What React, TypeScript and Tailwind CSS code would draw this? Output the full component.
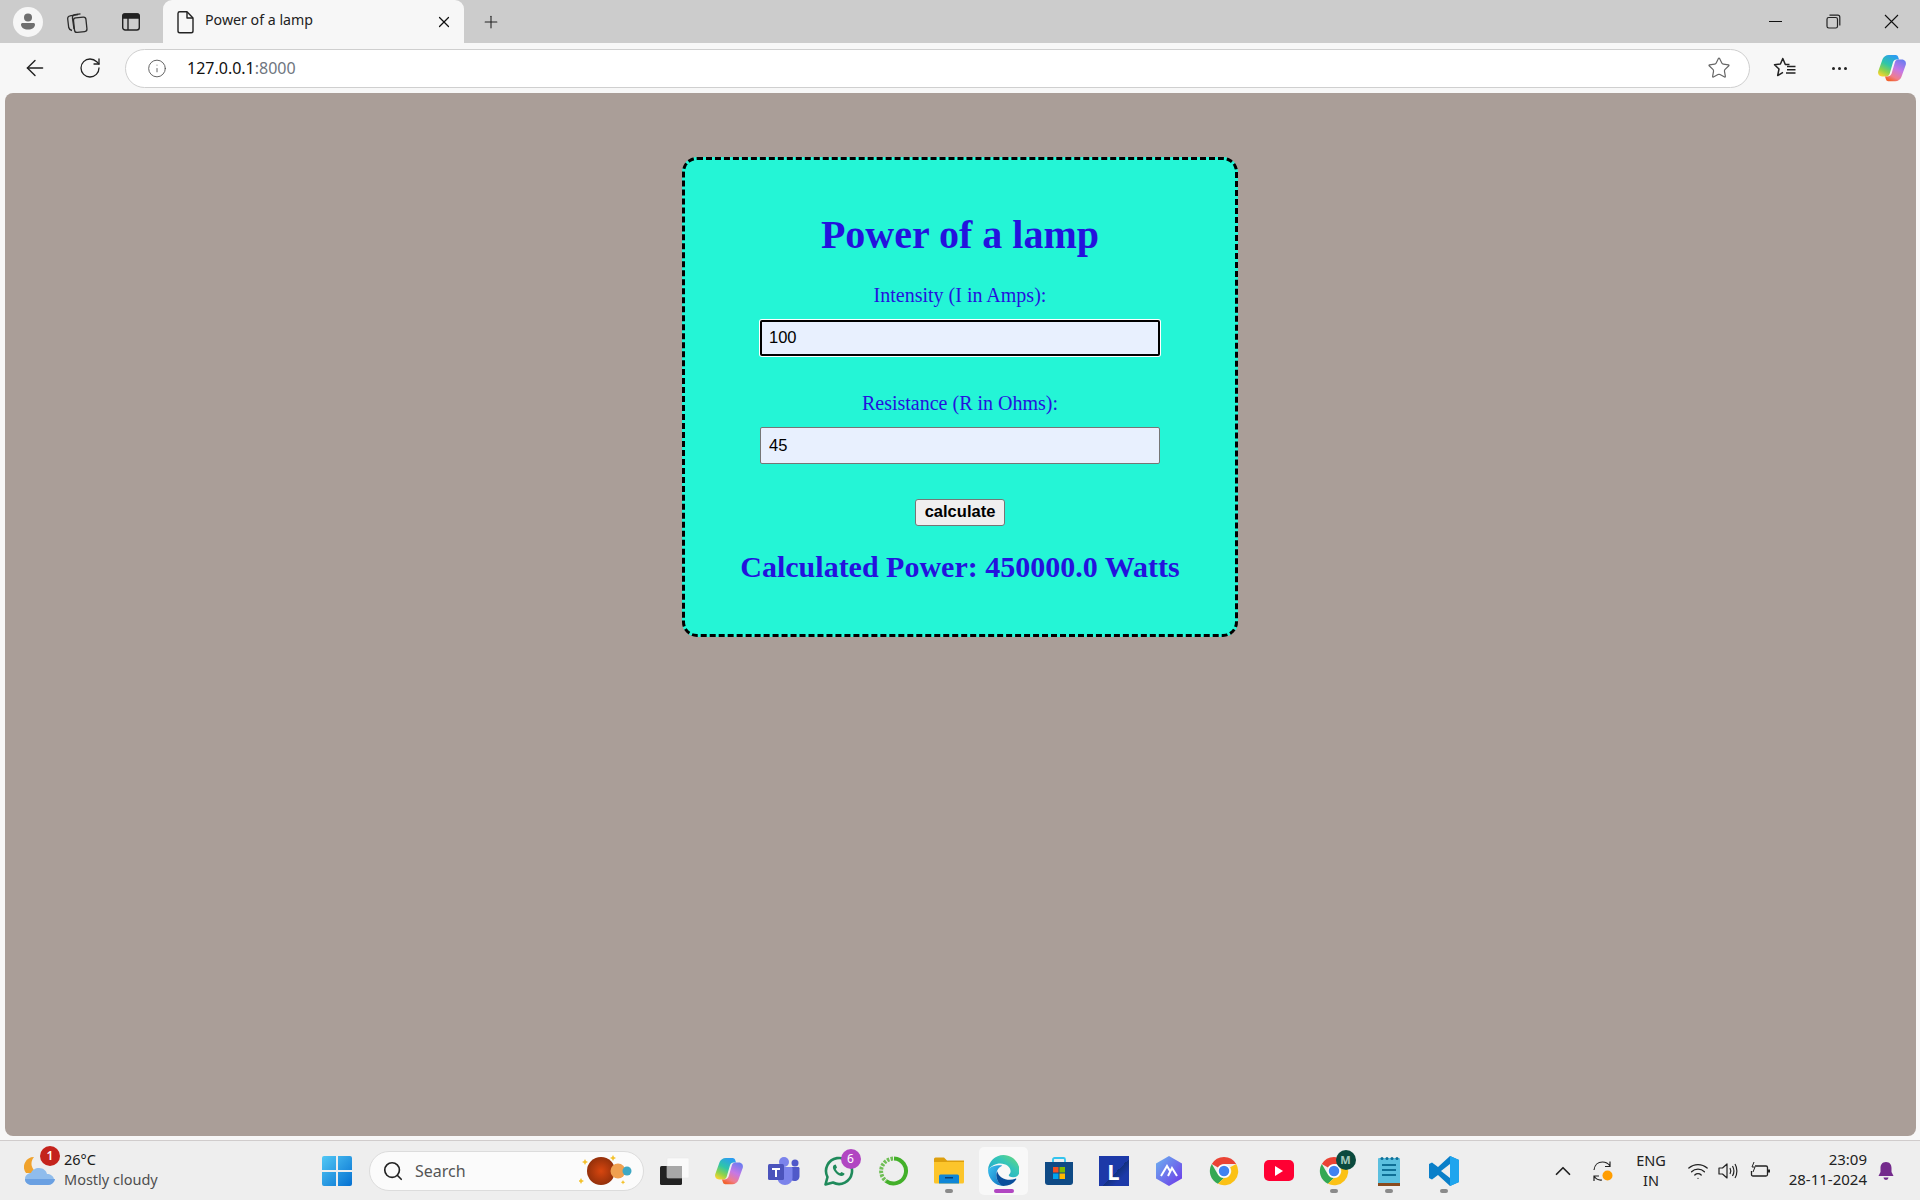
import React from "react";
import { ArrowLeft, RotateCw, X, Plus, Info, Star, ChevronUp, Wifi, Search } from "lucide-react";

const sans = "font-['Noto_Sans','Open_Sans',sans-serif]";

function Copilot({ size = 30, id }: { size?: number; id: string }) {
  return (
    <svg width={size} height={size} viewBox="0 0 32 32">
      <defs>
        <linearGradient id={`${id}a`} x1="0.7" y1="0" x2="0.2" y2="1">
          <stop offset="0" stopColor="#2b9cf2" />
          <stop offset="0.45" stopColor="#2fc6a8" />
          <stop offset="0.75" stopColor="#8fd24a" />
          <stop offset="1" stopColor="#f8d431" />
        </linearGradient>
        <linearGradient id={`${id}b`} x1="0.8" y1="0" x2="0.3" y2="1">
          <stop offset="0" stopColor="#6a7cf0" />
          <stop offset="0.45" stopColor="#c578e6" />
          <stop offset="0.8" stopColor="#f07d8c" />
          <stop offset="1" stopColor="#f2632f" />
        </linearGradient>
      </defs>
      <path d="M12.500 2H20c1.200 0 2 .8 2.400 1.800L23.500 7H21c-2 0-3.500 1.200-4 3l-3.500 12c-.6 2-2 3-4 3H5.500C2.500 25 .5 22.500 1.300 19.500L6 6.500C7 3.800 9.500 2 12.500 2z" fill={`url(#${id}a)`} />
      <path d="M19.500 30H12c-1.200 0-2-.8-2.400-1.800L8.500 25H11c2 0 3.500-1.200 4.500-3l3.500-12c.6-2 2-3 4-3h3.500c3 0 5 2.500 4.200 5.500L26 25.500C25 28.200 22.500 30 19.500 30z" fill={`url(#${id}b)`} />
    </svg>
  );
}

function Chrome({ size = 30 }: { size?: number }) {
  return (
    <svg width={size} height={size} viewBox="0 0 32 32">
      <path d="M16 1a15 15 0 0 1 13 7.500H16a7.500 7.500 0 0 0-6.500 3.750L3 8.500A15 15 0 0 1 16 1z" fill="#ea4335" />
      <path d="M3 8.500l6.500 11.250a7.500 7.500 0 0 0 6.500 3.750L9.500 29.700A15 15 0 0 1 3 8.500z" fill="#34a853" />
      <path d="M29 8.500A15 15 0 0 1 9.500 29.700L16 23.500a7.500 7.500 0 0 0 6.500-11.500z" fill="#fbc116" />
      <circle cx="16" cy="16" r="7" fill="#fff" />
      <circle cx="16" cy="16" r="5.600" fill="#3f82f1" />
    </svg>
  );
}

function Dot({ color = "#8a8a8a", w = 8 }: { color?: string; w?: number }) {
  return <span className="absolute bottom-[2px] left-1/2 h-[4px] -translate-x-1/2 rounded-full" style={{ width: w, background: color }} />;
}

function Cell({ children, dot, active }: { children: React.ReactNode; dot?: boolean; active?: boolean }) {
  return (
    <div className={active ? "relative mx-[3px] flex h-[48px] w-[49px] items-center justify-center rounded-[5px] bg-[#f8f8f8]" : "relative flex h-[48px] w-[55px] items-center justify-center"}>
      {children}
      {dot && <Dot />}
      {active && <Dot color="#b146c2" w={20} />}
    </div>
  );
}

function Tool({ children, w = 55 }: { children: React.ReactNode; w?: number }) {
  return <div className="flex h-full shrink-0 items-center justify-center" style={{ width: w }}>{children}</div>;
}

export default function App() {
  return (
    <div className={`flex h-[1200px] w-[1920px] flex-col overflow-hidden bg-[#f7f7f7] ${sans}`}>
      {/* tab strip */}
      <div className="flex h-[43px] shrink-0 items-center bg-[#cccccc]">
        <div className="ml-[13px] flex h-[30px] w-[30px] items-center justify-center rounded-full bg-[#f6f6f6]">
          <svg width="20" height="20" viewBox="0 0 20 20" fill="#6f6f6f">
            <circle cx="10" cy="5.500" r="4" />
            <path d="M3 12.500c0-1 .8-1.500 1.700-1.500h10.600c.9 0 1.700.5 1.700 1.500 0 3-3 5-7 5s-7-2-7-5z" />
          </svg>
        </div>
        <div className="ml-[22px] flex w-[24px] justify-center">
          <svg width="24" height="24" viewBox="0 0 24 24" fill="none" stroke="#2b2b2b" strokeWidth="1.300">
            <rect x="9" y="7.500" width="12.500" height="14.500" rx="2.500" transform="rotate(-6 15 15)" />
            <path d="M7 20.500C5 20 4 19 3.700 17.500L2.700 9C2.500 7.500 3.500 6 5 5.800L13 4.500" />
            <path d="M9 19 7.500 8.500C7.300 6.800 8.300 5 10 4.700L15.500 3.800" />
          </svg>
        </div>
        <div className="ml-[30px] flex w-[24px] justify-center">
          <svg width="20" height="20" viewBox="0 0 20 20" fill="none" stroke="#222" strokeWidth="1.400">
            <rect x="1.700" y="2" width="16.600" height="16" rx="2.500" />
            <path d="M2 3.500c0-1 .6-1.500 1.500-1.500h13c1 0 1.500.6 1.500 1.500V6H2z" fill="#222" />
            <path d="M7 6v12" />
          </svg>
        </div>
        <div className="ml-[20px] flex h-full w-[301px] items-center self-end rounded-t-[9px] bg-[#f7f7f7] pl-[11px] pr-[11px]">
          <svg width="22" height="24" viewBox="0 0 22 24" fill="none" stroke="#222" strokeWidth="1.400">
            <path d="M4 3.500C4 2.500 4.800 1.800 5.800 1.800H13L19 8v13c0 1-.8 1.800-1.800 1.800H5.800C4.800 22.800 4 22 4 21z" strokeLinejoin="round" />
            <path d="M13 2v6h6" strokeLinejoin="round" />
          </svg>
          <span className="ml-[9px] flex-1 pb-[2px] text-[14.2px] leading-none text-[#222]">Power of a lamp</span>
          <X size={18} strokeWidth={1.600} color="#111" />
        </div>
        <div className="ml-[17px] flex w-[20px] justify-center">
          <Plus size={24} strokeWidth={1.300} color="#222" />
        </div>
        <div className="ml-auto flex h-full items-center">
          <div className="mr-[1px] flex items-center">
            <Tool w={57}><span className="block h-[1px] w-[13px] bg-[#111]" /></Tool>
          </div>
          <Tool w={57}>
            <svg width="15" height="15" viewBox="0 0 15 15" fill="none" stroke="#222" strokeWidth="1.200">
              <rect x="1" y="3.500" width="10.500" height="10.500" rx="1.800" />
              <path d="M3.500 1.200h8.300c1.200 0 2 .8 2 2v8.300" />
            </svg>
          </Tool>
          <div className="ml-[1px]">
            <Tool w={57}>
              <svg width="15" height="15" viewBox="0 0 15 15" fill="none" stroke="#111" strokeWidth="1.100"><path d="M1 1l13 13M14 1 1 14" /></svg>
            </Tool>
          </div>
        </div>
      </div>

      {/* toolbar */}
      <div className="flex h-[50px] shrink-0 items-center">
        <div className="ml-[21px] flex w-[28px] justify-center"><ArrowLeft size={26} strokeWidth={1.300} color="#222" /></div>
        <div className="ml-[27px] flex w-[28px] justify-center"><RotateCw size={24} strokeWidth={1.300} color="#222" /></div>
        <div className="ml-[21px] flex h-[39px] w-[1625px] items-center rounded-full border border-[#cfcfcf] bg-white">
          <div className="ml-[21px] flex w-[20px] justify-center"><Info size={23} strokeWidth={1.100} color="#555" /></div>
          <span className="ml-[20px] text-[16px] leading-none text-[#111]">127.0.0.1<span className="text-[#6f7680]">:8000</span></span>
          <div className="ml-auto mr-[18px]"><Star size={24} strokeWidth={1.200} color="#666" /></div>
        </div>
        <div className="ml-[22px] flex w-[26px] justify-center">
          <svg width="24" height="24" viewBox="0 0 24 24" fill="none" stroke="#222" strokeWidth="1.500" strokeLinejoin="round">
            <path d="M16.500 8.500H12.300L9.800 2.500 7.400 8 1.500 8.700 6 13 4.700 19.500 10 16.300" />
            <path d="M14 10.500h8.500M14 13.800h8.500M13 17h9.500" />
          </svg>
        </div>
        <div className="ml-[28px] flex w-[26px] items-center justify-center gap-[3px]">
          <span className="h-[3px] w-[3px] rounded-full bg-[#222]" />
          <span className="h-[3px] w-[3px] rounded-full bg-[#222]" />
          <span className="h-[3px] w-[3px] rounded-full bg-[#222]" />
        </div>
        <div className="ml-[25px]"><Copilot size={30} id="cpt" /></div>
      </div>

      {/* page */}
      <div className="ml-[5px] mr-[4px] flex h-[1043px] shrink-0 justify-center rounded-[8px] bg-[#aa9e98] pr-[1px] pt-[64px] font-['Liberation_Serif',serif]">
        <div className="box-border flex h-[480px] w-[556px] flex-col items-center rounded-[15px] border-[3px] border-dashed border-black bg-[#24f5d6] pt-[52px] text-[#2412dd]">
          <h1 className="text-[40px] font-bold leading-[46px]">Power of a lamp</h1>
          <label className="mt-[26px] text-[20px] leading-[23px]">Intensity (I in Amps):</label>
          <input
            readOnly
            value="100"
            className="mt-[13px] box-border h-[36px] w-[400px] rounded-[2px] border-2 border-black bg-[#e8f0fe] pb-[1px] pl-[7px] font-['Liberation_Sans',sans-serif] text-[16.5px] text-black shadow-[0_0_0_1px_#ffffff] outline-none"
          />
          <label className="mt-[36px] text-[20px] leading-[23px]">Resistance (R in Ohms):</label>
          <input
            readOnly
            value="45"
            className="mt-[12px] box-border h-[37px] w-[400px] rounded-[2px] border border-[#767676] bg-[#e8f0fe] pb-[1px] pl-[8px] font-['Liberation_Sans',sans-serif] text-[16.5px] text-black outline-none"
          />
          <button className="mt-[35px] box-border h-[27px] w-[90px] rounded-[3px] border border-[#767676] bg-[#efefef] pb-[2px] font-['Liberation_Sans',sans-serif] text-[16.5px] font-bold leading-none text-black">
            calculate
          </button>
          <h2 className="mt-[23px] text-[30px] font-bold leading-[35px]">Calculated Power: 450000.0 Watts</h2>
        </div>
      </div>

      {/* taskbar */}
      <div className="mt-[4px] flex h-[60px] shrink-0 items-center border-t border-[#d0cccc] bg-[#eeeeee]">
        <div className="relative ml-[24px] flex h-full w-[285px] items-center">
          <svg width="32" height="36" viewBox="0 0 32 36">
            <path d="M10 4a10 10 0 0 0 4 16H2A10 10 0 0 1 10 4z" fill="#f0a22c" />
            <path d="M8 32c-4 0-7-2.500-7-6s3-6 6-6c1-3 4.500-5 8-5 4.500 0 7.500 3 8 6 3 0 7 2 7 5.500S27 32 24 32z" fill="#8fbcec" />
            <path d="M8 32c-4 0-7-2.500-7-6h30c0 3-4 6-7 6z" fill="#6aa0e2" />
          </svg>
          <span className="absolute left-[16px] top-[5px] flex h-[20px] w-[20px] items-center justify-center rounded-full bg-[#c4231c] text-[12px] font-semibold leading-none text-white">1</span>
          <div className="ml-[8px] -mt-[4px] flex flex-col text-[14.5px] leading-[20px]">
            <span className="text-[#1b1b1b]">26°C</span>
            <span className="text-[#4f4f4f]">Mostly cloudy</span>
          </div>
        </div>
        <div className="flex w-[55px] justify-center">
          <svg width="30" height="30" viewBox="0 0 30 30">
            <defs>
              <linearGradient id="win" x1="0" y1="0" x2="1" y2="1">
                <stop offset="0" stopColor="#52c8f5" />
                <stop offset="1" stopColor="#0570d1" />
              </linearGradient>
            </defs>
            <path d="M0 2a2 2 0 0 1 2-2h12v14H0zM16 0h12a2 2 0 0 1 2 2v12H16zM0 16h14v14H2a2 2 0 0 1-2-2zM16 16h14v12a2 2 0 0 1-2 2H16z" fill="url(#win)" />
          </svg>
        </div>
        <div className="ml-[5px] mr-[2px] flex h-[40px] w-[275px] items-center rounded-full border border-[#dcdcdc] bg-[#fbfbfb] pl-[12px]">
          <Search size={22} strokeWidth={1.800} color="#222" />
          <span className="ml-[11px] text-[16px] leading-none text-[#555]">Search</span>
          <svg className="ml-auto mr-[4px]" width="60" height="36" viewBox="0 0 60 36">
            <defs>
              <radialGradient id="sun"><stop offset="0" stopColor="#d8460f" /><stop offset="1" stopColor="#94300a" /></radialGradient>
            </defs>
            <circle cx="22" cy="18" r="14" fill="url(#sun)" />
            <circle cx="39" cy="18" r="7.500" fill="#f0a050" />
            <circle cx="48" cy="18" r="4.500" fill="#3ea8c4" />
            <path d="M6 6l1 2 2 1-2 1-1 2-1-2-2-1 2-1zM34 2l1 2 2 1-2 1-1 2-1-2-2-1 2-1zM2 25l1 2 2 1-2 1-1 2-1-2-2-1 2-1zM44 27l.7 1.500 1.500.7-1.500.7L44 31.500l-.7-1.600-1.500-.7 1.500-.7z" fill="#f4c22c" />
          </svg>
        </div>
        <div className="flex items-center">
          <Cell>
            <svg width="30" height="30" viewBox="0 0 30 30">
              <rect x="1" y="10" width="22" height="19" rx="1.500" fill="#222" />
              <rect x="8" y="2" width="22" height="20" rx="1" fill="#fafafa" stroke="#e4e4e4" strokeWidth="0.5" />
              <rect x="8" y="10" width="15" height="12" fill="#a8a8a8" />
            </svg>
          </Cell>
          <Cell><Copilot id="cpb" /></Cell>
          <Cell>
            <svg width="32" height="30" viewBox="0 0 32 30">
              <circle cx="16" cy="6" r="5" fill="#7b83eb" />
              <circle cx="27" cy="7" r="3.500" fill="#5059c9" />
              <path d="M22 11h8c1 0 1.500.6 1.500 1.500V20c0 3-2 5-5 5s-4.500-2-4.500-4z" fill="#5059c9" />
              <path d="M9 11h14c1 0 1.500.6 1.500 1.500V22c0 4-3.500 7-7.500 7-4 0-7.500-3-7.500-7z" fill="#7b83eb" />
              <rect x="0" y="8" width="16" height="16" rx="1.500" fill="#4b53bc" />
              <path d="M4 12h8v2H9v7H7v-7H4z" fill="#fff" />
            </svg>
          </Cell>
          <Cell>
            <div className="relative h-[30px] w-[30px]">
              <svg width="30" height="30" viewBox="0 0 30 30" fill="none">
                <path d="M1.500 28.500 3.500 21A13 13 0 1 1 9 26.500z" stroke="#1f8a5b" strokeWidth="2.600" strokeLinejoin="round" />
                <path d="M10 9c-1.500 1-1.500 3 0 5.500 1.500 2.500 4 5 7 5.500 2 .3 3.500-1 3.500-2.500l-3-1.500-1.500 1.300c-2-1-3.500-2.500-4.300-4.300l1.300-1.500-1.300-3z" fill="#1f8a5b" />
              </svg>
              <span className="absolute -right-[7px] -top-[7px] flex h-[20px] w-[20px] items-center justify-center rounded-full bg-[#b146c2] text-[12px] leading-none text-white">6</span>
            </div>
          </Cell>
          <Cell>
            <svg width="30" height="30" viewBox="0 0 30 30" fill="none">
              <path d="M15 2.500A12.500 12.500 0 1 1 7 25" stroke="#43b02a" strokeWidth="4" />
              <path d="M14 2.600A12.500 12.500 0 0 0 7 25" stroke="#6fbe55" strokeWidth="4" strokeDasharray="2.500 1.200" />
            </svg>
          </Cell>
          <Cell dot>
            <svg width="30" height="30" viewBox="0 0 30 30">
              <path d="M0 3a1.500 1.500 0 0 1 1.500-1.500H10L13 4.500h17V10H0z" fill="#dd9f0e" />
              <path d="M0 6h30v20a1.500 1.500 0 0 1-1.500 1.500h-27A1.500 1.500 0 0 1 0 26z" fill="#fcc52b" />
              <path d="M5 20a1.500 1.500 0 0 1 1.500-1.500h17A1.500 1.500 0 0 1 25 20v7.500H5z" fill="#0f86d6" />
              <rect x="11" y="21" width="8" height="1.500" fill="#0a3f74" />
            </svg>
          </Cell>
          <Cell active>
            <svg width="31" height="31" viewBox="0 0 24 24">
              <defs>
                <linearGradient id="edgeA" x1="0" y1="0" x2="1" y2="1">
                  <stop offset="0" stopColor="#3fc3f0" />
                  <stop offset="1" stopColor="#0b6fbf" />
                </linearGradient>
                <linearGradient id="edgeB" x1="0" y1="1" x2="1" y2="0">
                  <stop offset="0" stopColor="#1a9fd6" />
                  <stop offset="0.6" stopColor="#36c6b8" />
                  <stop offset="1" stopColor="#6fdc72" />
                </linearGradient>
              </defs>
              <path d="M12 0C5.500 0 .5 5 0 11.500c2-3 6-5 9.500-5 4.500 0 8 2.800 8 6 0 1.200-.6 2-1.300 2.800-.3.4 0 1 .6 1.300 1.500.8 4 .9 5.700-.2 1.400-1 2-2.500 2-4.400C24 5 18.500 0 12 0z" fill="url(#edgeB)" />
              <path d="M0 11.500C0 18.500 5.500 24 12 24c-3.500-1.500-5.600-4.800-5.600-8.500 0-3 1.700-6 4.600-7.200-.5-.2-1-.3-1.500-.3C5 8 1 9.500 0 11.500z" fill="url(#edgeA)" />
              <path d="M6.400 15.500c0 4 3 8.500 5.600 8.500 3.800 0 7.500-1.500 9.800-5 .3-.5-.1-1-.7-.7-1.300.6-2.700.9-4.100.9-5 0-9-2.800-9.800-6.700-.5.8-.8 1.900-.8 3z" fill="#0a4f9c" />
            </svg>
          </Cell>
          <Cell>
            <svg width="30" height="30" viewBox="0 0 30 30">
              <path d="M9 6V3.500C9 2.500 9.700 2 10.500 2h9c.8 0 1.500.5 1.500 1.500V6" fill="none" stroke="#33c4ee" strokeWidth="1.800" />
              <path d="M1 6h28v20a3 3 0 0 1-3 3H4a3 3 0 0 1-3-3z" fill="#0f4a85" />
              <rect x="9" y="11" width="5.500" height="5.500" fill="#f25022" />
              <rect x="15.500" y="11" width="5.500" height="5.500" fill="#7fba00" />
              <rect x="9" y="17.500" width="5.500" height="5.500" fill="#00a4ef" />
              <rect x="15.500" y="17.500" width="5.500" height="5.500" fill="#ffb900" />
            </svg>
          </Cell>
          <Cell>
            <div className="flex h-[30px] w-[30px] items-center justify-center bg-[linear-gradient(135deg,#1c39a8_55%,#12307f_55%,#1c39a8_75%)] text-[22px] font-bold leading-none text-white">L</div>
          </Cell>
          <Cell>
            <svg width="30" height="30" viewBox="0 0 30 30">
              <defs>
                <linearGradient id="hex" x1="0" y1="0" x2="1" y2="1">
                  <stop offset="0" stopColor="#6cb4f0" />
                  <stop offset="1" stopColor="#6d35e8" />
                </linearGradient>
              </defs>
              <path d="M15 0 28 7.500v15L15 30 2 22.500v-15z" fill="url(#hex)" />
              <path d="M7 20 13 10l3 5M14 20l4-8 5 8" fill="none" stroke="#fff" strokeWidth="2" />
            </svg>
          </Cell>
          <Cell><Chrome /></Cell>
          <Cell>
            <div className="flex h-[21px] w-[30px] items-center justify-center rounded-[5px] bg-[#ff0033]">
              <svg width="10" height="10" viewBox="0 0 10 10"><path d="M1 0 9 5 1 10z" fill="#fff" /></svg>
            </div>
          </Cell>
          <Cell dot>
            <div className="relative">
              <Chrome />
              <span className="absolute -right-[7px] -top-[6px] flex h-[20px] w-[20px] items-center justify-center rounded-full bg-[#0b4a3e] text-[11px] font-bold leading-none text-[#a5c9bd]">M</span>
            </div>
          </Cell>
          <Cell dot>
            <svg width="24" height="30" viewBox="0 0 24 30">
              <rect x="1" y="2" width="22" height="27" fill="#5bbfdf" rx="1" />
              <rect x="1" y="27" width="22" height="3" fill="#8a4b1e" />
              <path d="M5 9h14M5 14h14M5 19h14" stroke="#0f6f96" strokeWidth="1.800" />
              <circle cx="5" cy="2.500" r="1.500" fill="#0f6f96" /><circle cx="10" cy="2.500" r="1.500" fill="#0f6f96" /><circle cx="15" cy="2.500" r="1.500" fill="#0f6f96" /><circle cx="20" cy="2.500" r="1.500" fill="#0f6f96" />
            </svg>
          </Cell>
          <Cell dot>
            <svg width="30" height="30" viewBox="0 0 30 30">
              <path d="M21 0 30 4v22l-9 4-12-11-6 4.500L0 22v-14l3-1.500 6 4.500z" fill="#0a7fc9" />
              <path d="M21 0 30 4v22l-9 4z" fill="#1fa5ee" />
              <path d="M21 8 12 15l9 7z" fill="#eeeeee" />
            </svg>
          </Cell>
        </div>
        {/* tray */}
        <div className="ml-[84px] flex w-[16px] justify-center"><ChevronUp size={26} strokeWidth={1.600} color="#222" className="shrink-0" /></div>
        <div className="ml-[21px]">
          <svg width="24" height="24" viewBox="0 0 24 24" fill="none" stroke="#222" strokeWidth="1.200">
            <path d="M2 11C2.500 6 6 3 10.500 3c3 0 5.500 1 7.500 4M18 2.500V7.500h-5" />
            <path d="M2 22v-5h5M2 17c2 3 5 4.500 8 4" />
            <circle cx="15.500" cy="16.500" r="5" fill="#ff9d00" stroke="none" />
          </svg>
        </div>
        <div className="ml-[19px] -mt-[1px] flex w-[32px] flex-col items-center text-[14.5px] leading-[20px] text-[#222]">
          <span>ENG</span>
          <span>IN</span>
        </div>
        <div className="ml-[20px]"><Wifi size={22} strokeWidth={1.400} color="#222" /></div>
        <div className="ml-[9px]">
          <svg width="21" height="20" viewBox="0 0 21 20" fill="none" stroke="#222" strokeWidth="1.200">
            <path d="M1 7h3.500L9 3v14l-4.500-4H1z" strokeLinejoin="round" />
            <path d="M12 7c1 1.800 1 4.200 0 6M14.500 5c1.700 3 1.700 7 0 10M17 3c2.500 4 2.500 10 0 14" />
          </svg>
        </div>
        <div className="ml-[10px]">
          <svg width="22" height="20" viewBox="0 0 22 20" fill="none" stroke="#222" strokeWidth="1.300">
            <path d="M6 5h11c1 0 1.500.6 1.500 1.500v7c0 1-.5 1.500-1.500 1.500H4c-1 0-1.500-.5-1.500-1.500V10" />
            <path d="M20 8.500v3" strokeWidth="2" />
            <path d="M5 1 3 6h3l-2 5" strokeWidth="1" />
          </svg>
        </div>
        <div className="ml-[12px] -mt-[3px] flex w-[84px] flex-col items-end text-[15px] leading-[20px] text-[#222]">
          <span>23:09</span>
          <span className="whitespace-nowrap">28-11-2024</span>
        </div>
        <div className="ml-[10px]">
          <svg width="18" height="20" viewBox="0 0 18 20" fill="#742a8c">
            <path d="M9 1C5 1 3.500 4 3.500 7v4L1.500 15h15l-2-4V7C14.500 4 13 1 9 1z" />
            <path d="M6.500 16.500a2.500 2.500 0 0 0 5 0z" />
          </svg>
        </div>
      </div>
    </div>
  );
}
